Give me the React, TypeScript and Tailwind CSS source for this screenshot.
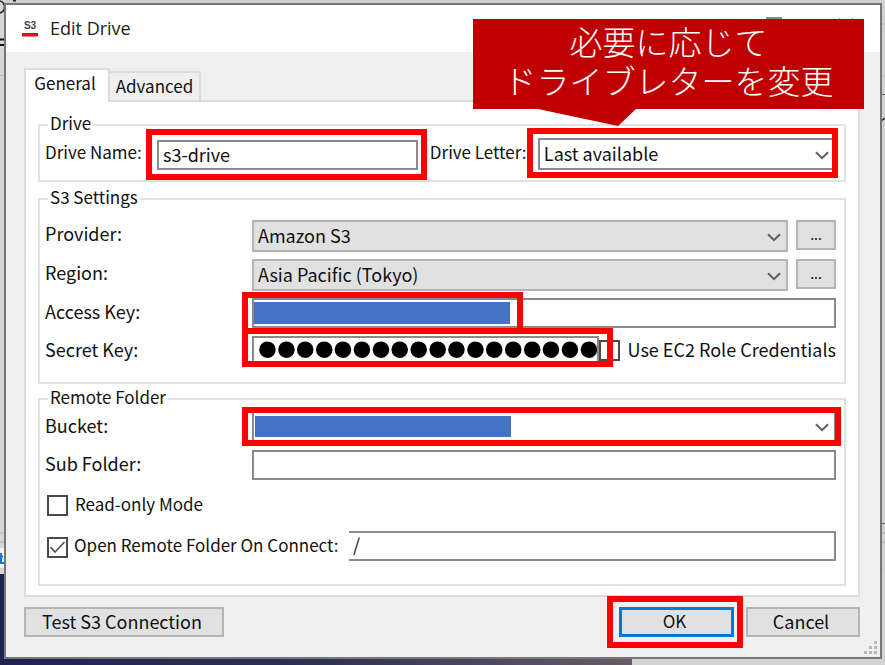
import type { ReactNode } from 'react';

const labelCls = 'mt-px w-[207px] shrink-0 leading-6';
const inputCls = 'block h-[30px] min-w-0 w-full border-2 border-[#8a8a8a] bg-white px-1 pb-[2px] outline-none';
const buttonCls = 'h-[30px] border-2 border-[#b4b4b4] bg-[#e1e1e1] pb-[2px] leading-6 text-center';

// Red frame drawn around a control
function Mark({ className }: { className: string }) {
  return <div className={`pointer-events-none absolute z-10 border-[6px] border-[#ff0000] ${className}`} />;
}

function Select({ id, value, className }: { id: string; value: string; className: string }) {
  return (
    <div className="relative min-w-0 flex-1">
      <select
        id={id}
        defaultValue={value}
        className={`block h-8 w-full appearance-none border-2 pb-[3px] pl-1 pr-8 outline-none ${className}`}
      >
        <option>{value}</option>
      </select>
      <svg
        viewBox="0 0 14 9"
        className="pointer-events-none absolute right-[7px] top-[13px] h-[9px] w-[14px]"
        fill="none"
        stroke="#5f5f5f"
        strokeWidth="2"
      >
        <path d="M1 1.2l6 6 6-6" />
      </svg>
    </div>
  );
}

function CheckBox({ id, checked = false }: { id: string; checked?: boolean }) {
  return (
    <span className="relative block h-[21px] w-[21px] shrink-0">
      <input
        id={id}
        type="checkbox"
        defaultChecked={checked}
        className="peer block h-[21px] w-[21px] appearance-none border-2 border-[#4a4a4a] bg-white"
      />
      <svg
        viewBox="0 0 21 21"
        className="pointer-events-none absolute inset-0 hidden peer-checked:block"
        fill="none"
        stroke="#555"
        strokeWidth="1.8"
      >
        <path d="M3.5 10l4.5 5L17.5 5" />
      </svg>
    </span>
  );
}

function Group({ title, className, children }: { title: string; className: string; children: ReactNode }) {
  return (
    <fieldset className={`min-w-0 border-2 border-[#e2e2e2] pl-[5px] pr-2 ${className}`}>
      <legend className="ml-[3px] h-5 px-[2px] text-[17px] leading-4">{title}</legend>
      {children}
    </fieldset>
  );
}

// Desktop and window edges visible behind the dialog
function Backdrop() {
  return (
    <div aria-hidden="true" className="absolute inset-0 -z-10 flex flex-col bg-[#d0d0d0]">
      <div className="flex flex-1 items-start justify-between">
        <svg viewBox="0 0 60 574" className="h-[574px] w-[60px]" fill="none">
          <path d="M0 0h5v574H0z" fill="#d6d6d6" />
          <path d="M0 1c6 2 6 10 0 12" stroke="#222" strokeWidth="1.5" />
          <path d="M13 0h3v1.5h-3z" fill="#222" />
          <path d="M0 39.5h4M0 45h4" stroke="#111" strokeWidth="2" />
          <path d="M0 75.5h4M0 533h4M0 542h4" stroke="#b4b4b4" />
          <path d="M0 548h4v20H0z" fill="#f4f4f4" />
          <path d="M1 553v10h3M0 556.500h3" stroke="#1878d8" strokeWidth="2" />
        </svg>
        <svg viewBox="0 0 4 574" className="h-[574px] w-1" fill="none">
          <path d="M0 24h4M0 76h4" stroke="#b8b8b8" />
          <path d="M0 94.5h4M0 523.5h4" stroke="#606878" />
          <path d="M0 121l4-3" stroke="#222" strokeWidth="1.5" />
          <path d="M0 533h4M0 542h4" stroke="#aaa" />
        </svg>
      </div>
      <div className="flex h-[91px]">
        <div className="w-[71.4%] bg-linear-to-r from-[#1f2350] via-[#2d3154] to-[#6b5b66]" />
        <div className="flex-1 bg-[#d3d3d3]" />
      </div>
    </div>
  );
}

export default function App() {
  return (
    <div className="relative isolate min-h-screen overflow-hidden pb-[6px] pl-1 pr-[3px] pt-[3px] font-['Noto_Sans_CJK_JP','Liberation_Sans',sans-serif] text-[18px] text-[#111]">
      <Backdrop />

      <div role="dialog" aria-labelledby="title" className="relative border-2 border-[#777] bg-[#f0f0f0]">
        {/* Title bar */}
        <div className="flex h-[47px] items-center bg-white pl-[15px] pr-[26px]">
          <svg viewBox="0 0 18 26" className="h-[26px] w-[18px]">
            <text
              x="9"
              y="13"
              textAnchor="middle"
              className="font-['Liberation_Sans',sans-serif] text-[10px] font-bold"
              fill="#444"
            >
              S3
            </text>
            <path d="M1 17h16v3.500H1z" fill="#e01020" />
          </svg>
          <h1 id="title" className="ml-[11px] pb-[2px] font-['Open_Sans',sans-serif] text-[18px] leading-6 text-[#222]">
            Edit Drive
          </h1>
          <button aria-label="Maximize" className="ml-auto mt-3 self-start">
            <svg viewBox="0 0 16 16" className="h-4 w-4" fill="none" stroke="#888" strokeWidth="2">
              <path d="M1 1h14v14H1z" />
            </svg>
          </button>
          <button aria-label="Close" className="ml-14 mt-3 self-start">
            <svg viewBox="0 0 16 16" className="h-4 w-4" fill="none" stroke="#888">
              <path d="M1 1l14 14M15 1L1 15" />
            </svg>
          </button>
        </div>

        {/* Callout pointing at the drive letter list */}
        <div className="absolute right-[16px] top-[14px] z-20 w-[391px]">
          <p className="h-[90px] bg-[#c00000] pt-[3px] text-center text-[33px] font-light leading-[39px] text-white">
            必要に応じて
            <br />
            ドライブレターを変更
          </p>
          <svg viewBox="0 0 391 18" className="block h-[18px] w-full">
            <path d="M65 0l80 17 18-17z" fill="#c00000" />
          </svg>
        </div>

        <div className="pb-5 pl-[18px] pr-5 pt-4">
          {/* Tabs */}
          <div role="tablist" className="flex items-end">
            <button
              role="tab"
              aria-selected="true"
              className="relative z-10 -mb-[2px] h-[34px] w-[86px] border-2 border-b-0 border-[#dcdcdc] bg-white pb-[6px] pr-1 text-[17px] leading-6"
            >
              General
            </button>
            <button
              role="tab"
              aria-selected="false"
              className="h-[29px] w-[91px] border-2 border-b-0 border-l-0 border-[#dcdcdc] pb-[2px] text-[17px] leading-6"
            >
              Advanced
            </button>
          </div>

          <div role="tabpanel" className="border-2 border-[#dcdcdc] bg-white px-3 pb-[9px] pt-[13px]">
            <Group title="Drive" className="h-[67px]">
              <div className="mt-[3px] flex items-start">
                <label htmlFor="name" className="mt-[2px] w-28 shrink-0 whitespace-nowrap text-[17px] leading-6">
                  Drive Name:
                </label>
                <div className="relative mt-[2px] min-w-0 flex-[7]">
                  <input id="name" defaultValue="s3-drive" className={inputCls} />
                  <Mark className="-bottom-[10px] -left-[11px] -right-[9px] -top-[11px]" />
                </div>
                <label htmlFor="letter" className="ml-3 mt-[2px] w-[108px] shrink-0 whitespace-nowrap text-[17px] leading-6">
                  Drive Letter:
                </label>
                <div className="relative flex min-w-0 flex-[8]">
                  <Select id="letter" value="Last available" className="border-[#8a8a8a] bg-white" />
                  <Mark className="-bottom-[8px] -left-[11px] -right-[2px] -top-[10px]" />
                </div>
              </div>
            </Group>

            <Group title="S3 Settings" className="mt-[7px] h-[195px]">
              <div className="mt-[11px] flex items-start">
                <label htmlFor="provider" className={labelCls}>Provider:</label>
                <Select id="provider" value="Amazon S3" className="border-[#b4b4b4] bg-[#e1e1e1]" />
                <button aria-label="Provider options" className={`${buttonCls} ml-2 w-10 text-sm`}>...</button>
              </div>
              <div className="mt-[7px] flex items-start">
                <label htmlFor="region" className={labelCls}>Region:</label>
                <Select id="region" value="Asia Pacific (Tokyo)" className="border-[#b4b4b4] bg-[#e1e1e1]" />
                <button aria-label="Region options" className={`${buttonCls} ml-2 w-10 text-sm`}>...</button>
              </div>
              <div className="mt-[7px] flex items-start">
                <label htmlFor="access" className={labelCls}>Access Key:</label>
                <div className="relative min-w-0 flex-1">
                  <input id="access" className={inputCls} />
                  <div className="absolute left-[2px] top-1 h-[22px] w-[256px] bg-[#4472c4]" />
                  <Mark className="-left-[10px] -top-[6px] h-[42px] w-[281px]" />
                </div>
              </div>
              <div className="mt-2 flex items-start">
                <label htmlFor="secret" className={labelCls}>Secret Key:</label>
                <div className="relative min-w-0 flex-1">
                  <input
                    id="secret"
                    type="password"
                    defaultValue="000000000000000000"
                    className="block h-[30px] w-full border-2 border-[#8a8a8a] bg-white pb-1 pl-1 font-['Liberation_Sans',sans-serif] text-[54px] leading-[22px] text-black outline-none [-webkit-text-stroke:2px_black]"
                  />
                  <Mark className="-left-[10px] -right-[14px] -top-[8px] h-[39px]" />
                </div>
                <div className="mt-1">
                  <CheckBox id="ec2" />
                </div>
                <label htmlFor="ec2" className="ml-2 mt-px whitespace-nowrap leading-6">
                  Use EC2 Role Credentials
                </label>
              </div>
            </Group>

            <Group title="Remote Folder" className="mt-[5px] h-[197px]">
              <div className="mt-px flex items-start">
                <label htmlFor="bucket" className={`${labelCls} pt-[2px]`}>Bucket:</label>
                <div className="relative flex min-w-0 flex-1">
                  <Select id="bucket" value="" className="border-[#8a8a8a] bg-white" />
                  <div className="absolute left-[3px] top-[6px] h-[21px] w-[256px] bg-[#4472c4]" />
                  <Mark className="-left-[10px] -right-[5px] -top-[3px] h-[39px]" />
                </div>
              </div>
              <div className="mt-2 flex items-start">
                <label htmlFor="sub" className={labelCls}>Sub Folder:</label>
                <div className="min-w-0 flex-1">
                  <input id="sub" className={inputCls} />
                </div>
              </div>
              <div className="ml-[2px] mt-[15px] flex h-[21px] items-center">
                <CheckBox id="readonly" />
                <label htmlFor="readonly" className="ml-[7px] pb-[3px] text-[17px] leading-6">Read-only Mode</label>
              </div>
              <div className="ml-[2px] mt-[15px] flex items-start">
                <div className="mt-[6px]">
                  <CheckBox id="open" checked />
                </div>
                <label htmlFor="open" className="ml-[6px] mt-[2px] w-[275px] shrink-0 whitespace-nowrap text-[17px] leading-6">
                  Open Remote Folder On Connect:
                </label>
                <input
                  aria-label="Folder to open"
                  defaultValue="/"
                  className="h-[30px] min-w-0 flex-1 border-2 border-l-0 border-[#8a8a8a] bg-white pb-1 pl-1 outline-none"
                />
              </div>
            </Group>
          </div>

          <div className="mt-[10px] flex">
            <button className={`${buttonCls} w-[200px] pr-1`}>Test S3 Connection</button>
            <div className="relative ml-auto">
              <button className="block h-[30px] w-[115px] border-[3px] border-[#0078d7] bg-[#e1e1e1] pb-[2px] pr-1 text-[17px] leading-[22px]">
                OK
              </button>
              <Mark className="-bottom-[11px] -left-[12px] -right-[9px] -top-[11px]" />
            </div>
            <button className={`${buttonCls} ml-3 w-[114px] pr-1`}>Cancel</button>
          </div>
        </div>

        {/* Resize grip */}
        <svg viewBox="0 0 13 13" className="absolute bottom-[3px] right-[3px] h-[13px] w-[13px]" fill="#b8b8b8">
          <path d="M10 0h3v3h-3zM5 5h3v3H5zM10 5h3v3h-3zM0 10h3v3H0zM5 10h3v3H5zM10 10h3v3h-3z" />
        </svg>
      </div>
    </div>
  );
}
